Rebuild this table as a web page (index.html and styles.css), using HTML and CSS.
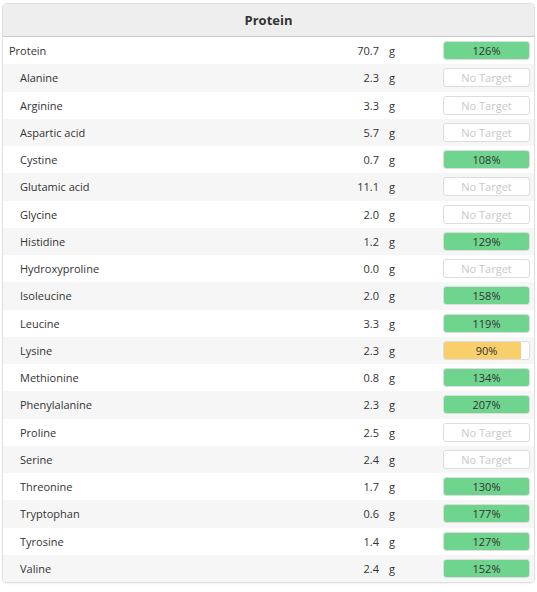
FILE: index.html
```html
<!DOCTYPE html>
<html lang="en">

<head>
    <meta charset="UTF-8">
    <meta name="viewport" content="width=device-width, initial-scale=1.0">
    <title>Protein</title>
    <link rel="stylesheet" href="styles.css">
</head>

<body>
    <div class="nutrient-panel">
        <div class="panel-header">Protein</div>

        <div class="nutrient-row main">
            <span class="name">Protein</span>
            <span class="amount">70.7</span>
            <span class="unit">g</span>
            <div class="target-bar"><div class="fill good" style="width: 100%"></div><span>126%</span></div>
        </div>
        <div class="nutrient-row">
            <span class="name">Alanine</span>
            <span class="amount">2.3</span>
            <span class="unit">g</span>
            <div class="target-bar empty"><span>No Target</span></div>
        </div>
        <div class="nutrient-row">
            <span class="name">Arginine</span>
            <span class="amount">3.3</span>
            <span class="unit">g</span>
            <div class="target-bar empty"><span>No Target</span></div>
        </div>
        <div class="nutrient-row">
            <span class="name">Aspartic acid</span>
            <span class="amount">5.7</span>
            <span class="unit">g</span>
            <div class="target-bar empty"><span>No Target</span></div>
        </div>
        <div class="nutrient-row">
            <span class="name">Cystine</span>
            <span class="amount">0.7</span>
            <span class="unit">g</span>
            <div class="target-bar"><div class="fill good" style="width: 100%"></div><span>108%</span></div>
        </div>
        <div class="nutrient-row">
            <span class="name">Glutamic acid</span>
            <span class="amount">11.1</span>
            <span class="unit">g</span>
            <div class="target-bar empty"><span>No Target</span></div>
        </div>
        <div class="nutrient-row">
            <span class="name">Glycine</span>
            <span class="amount">2.0</span>
            <span class="unit">g</span>
            <div class="target-bar empty"><span>No Target</span></div>
        </div>
        <div class="nutrient-row">
            <span class="name">Histidine</span>
            <span class="amount">1.2</span>
            <span class="unit">g</span>
            <div class="target-bar"><div class="fill good" style="width: 100%"></div><span>129%</span></div>
        </div>
        <div class="nutrient-row">
            <span class="name">Hydroxyproline</span>
            <span class="amount">0.0</span>
            <span class="unit">g</span>
            <div class="target-bar empty"><span>No Target</span></div>
        </div>
        <div class="nutrient-row">
            <span class="name">Isoleucine</span>
            <span class="amount">2.0</span>
            <span class="unit">g</span>
            <div class="target-bar"><div class="fill good" style="width: 100%"></div><span>158%</span></div>
        </div>
        <div class="nutrient-row">
            <span class="name">Leucine</span>
            <span class="amount">3.3</span>
            <span class="unit">g</span>
            <div class="target-bar"><div class="fill good" style="width: 100%"></div><span>119%</span></div>
        </div>
        <div class="nutrient-row">
            <span class="name">Lysine</span>
            <span class="amount">2.3</span>
            <span class="unit">g</span>
            <div class="target-bar"><div class="fill low" style="width: 90%"></div><span>90%</span></div>
        </div>
        <div class="nutrient-row">
            <span class="name">Methionine</span>
            <span class="amount">0.8</span>
            <span class="unit">g</span>
            <div class="target-bar"><div class="fill good" style="width: 100%"></div><span>134%</span></div>
        </div>
        <div class="nutrient-row">
            <span class="name">Phenylalanine</span>
            <span class="amount">2.3</span>
            <span class="unit">g</span>
            <div class="target-bar"><div class="fill good" style="width: 100%"></div><span>207%</span></div>
        </div>
        <div class="nutrient-row">
            <span class="name">Proline</span>
            <span class="amount">2.5</span>
            <span class="unit">g</span>
            <div class="target-bar empty"><span>No Target</span></div>
        </div>
        <div class="nutrient-row">
            <span class="name">Serine</span>
            <span class="amount">2.4</span>
            <span class="unit">g</span>
            <div class="target-bar empty"><span>No Target</span></div>
        </div>
        <div class="nutrient-row">
            <span class="name">Threonine</span>
            <span class="amount">1.7</span>
            <span class="unit">g</span>
            <div class="target-bar"><div class="fill good" style="width: 100%"></div><span>130%</span></div>
        </div>
        <div class="nutrient-row">
            <span class="name">Tryptophan</span>
            <span class="amount">0.6</span>
            <span class="unit">g</span>
            <div class="target-bar"><div class="fill good" style="width: 100%"></div><span>177%</span></div>
        </div>
        <div class="nutrient-row">
            <span class="name">Tyrosine</span>
            <span class="amount">1.4</span>
            <span class="unit">g</span>
            <div class="target-bar"><div class="fill good" style="width: 100%"></div><span>127%</span></div>
        </div>
        <div class="nutrient-row">
            <span class="name">Valine</span>
            <span class="amount">2.4</span>
            <span class="unit">g</span>
            <div class="target-bar"><div class="fill good" style="width: 100%"></div><span>152%</span></div>
        </div>
    </div>
</body>

</html>
```

FILE: styles.css
```css
* {
    margin: 0;
    padding: 0;
    box-sizing: border-box;
}

body {
    font-family: 'Open Sans', 'Noto Sans', sans-serif;
    font-size: 11px;
    color: #333;
    background: white;
    padding: 3px 2px;
}

.nutrient-panel {
    width: 533px;
    border: 1px solid #e0e0e0;
    border-radius: 4px;
    box-shadow: 0 1px 2px rgba(0, 0, 0, 0.06);
    overflow: hidden;
}

.panel-header {
    height: 33px;
    background: #eeeeee;
    border-bottom: 1px solid #c9c9c9;
    font-size: 13px;
    font-weight: 700;
    text-align: center;
    line-height: 33px;
}

.nutrient-row {
    display: grid;
    grid-template-columns: 1fr 80px 64px 87px;
    align-items: center;
    height: 27.25px;
    padding: 0 4px 0 17px;
    background: white;
}

.nutrient-row:nth-child(odd) {
    background: #f6f6f6;
}

.nutrient-row.main {
    padding-left: 6px;
}

.amount {
    text-align: right;
}

.unit {
    padding-left: 10px;
}

.target-bar {
    position: relative;
    height: 19px;
    border: 1px solid #dddddd;
    border-radius: 3px;
    background: white;
    overflow: hidden;
    text-align: center;
    line-height: 17px;
}

.target-bar .fill {
    position: absolute;
    top: 0;
    left: 0;
    bottom: 0;
}

.fill.good {
    background: #6fd48e;
}

.fill.low {
    background: #f8cf6b;
}

.target-bar span {
    position: relative;
}

.target-bar.empty span {
    color: #c8c8c8;
}
```
